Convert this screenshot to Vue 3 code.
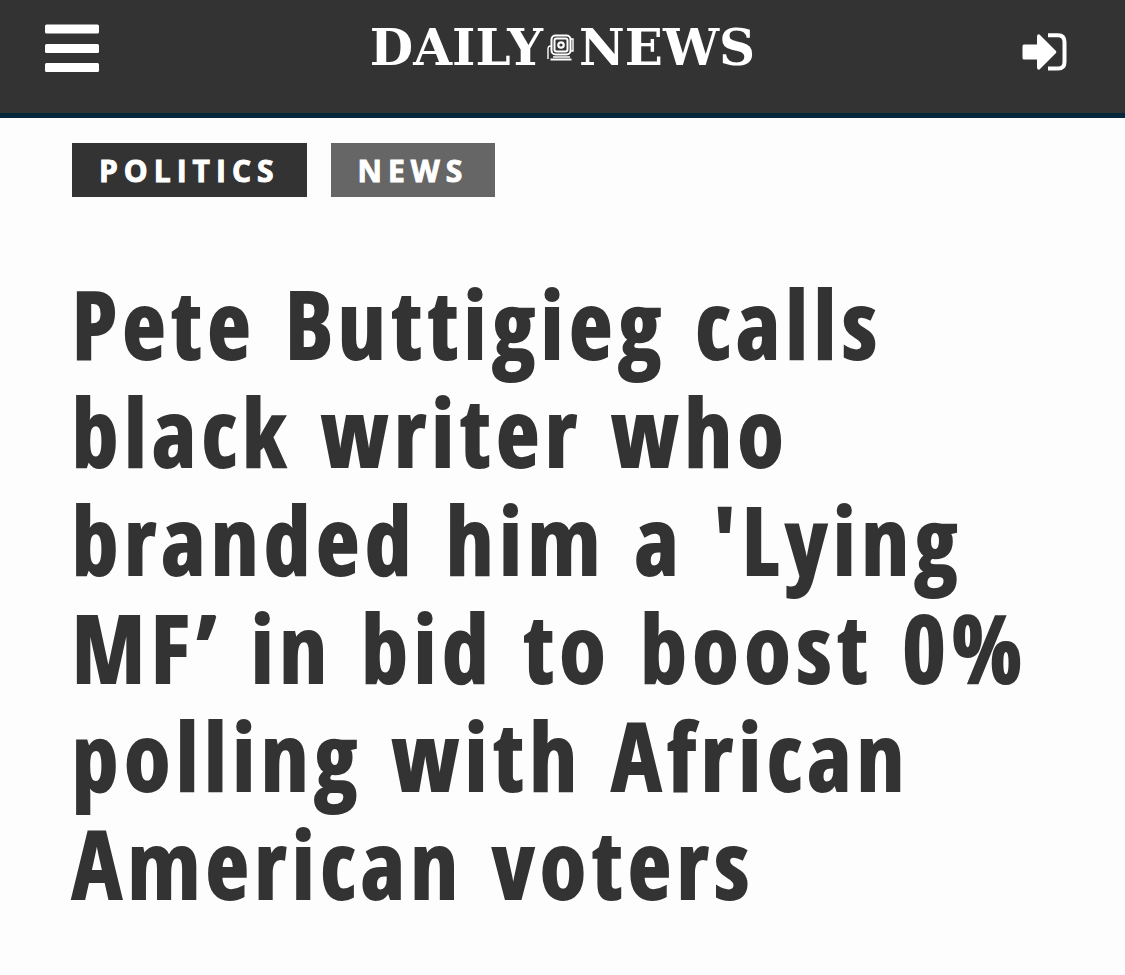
<script setup>
const tags = [
  { label: 'POLITICS', kind: 'primary' },
  { label: 'NEWS', kind: 'secondary' },
]
</script>

<template>
  <header class="masthead">
    <button class="icon-button" type="button" aria-label="Open menu">
      <svg width="54" height="49" viewBox="0 0 54 49" fill="#fff" aria-hidden="true">
        <rect x="0" y="0.5" width="54" height="9" rx="1.5" />
        <rect x="0" y="20" width="54" height="9" rx="1.5" />
        <rect x="0" y="39" width="54" height="9" rx="1.5" />
      </svg>
    </button>
    <a class="logo" href="#" aria-label="Daily News">
      <span>DAILY</span>
      <svg width="28" height="28" viewBox="0 0 28 28" fill="none" stroke="#fff" aria-hidden="true">
        <rect x="4.500" y="1.500" width="19" height="19" rx="4" stroke-width="2" />
        <rect x="7.500" y="4.500" width="13" height="13" rx="2" stroke-width="2" />
        <circle cx="14" cy="11" r="2.700" stroke-width="2.200" />
        <path d="M24 5h2v12h-2M4 12H3.500Q1 12 1 15v10M6 23h17" stroke-width="1.400" />
        <path d="M3.500 25.500h21" stroke-width="2" />
      </svg>
      <span>NEWS</span>
    </a>
    <button class="icon-button" type="button" aria-label="Log in">
      <svg width="46" height="38" viewBox="0 0 46 38" aria-hidden="true">
        <path d="M2 11.500H15V3Q15.500 .8 17.500 1.500L34 18Q34.700 19 34 20L17.500 36.500Q15.500 37.200 15 35V26.500H2Q.5 26.500 .5 25V13Q.5 11.500 2 11.500Z" fill="#fff" />
        <path d="M28 2.200H36Q42.500 2.200 42.500 9V29Q42.500 35.500 36 35.500H28" fill="none" stroke="#fff" stroke-width="4" stroke-linecap="square" stroke-linejoin="round" />
      </svg>
    </button>
  </header>
  <main class="article">
    <nav class="tags" aria-label="Sections">
      <a v-for="tag in tags" :key="tag.label" href="#" class="tag" :class="tag.kind">{{ tag.label }}</a>
    </nav>
    <h1>Pete Buttigieg calls black writer who branded him a 'Lying MF’ in bid to boost 0% polling with African American voters</h1>
  </main>
</template>

<style>
body {
  margin: 0;
  background: #fdfdfd;
}
</style>

<style scoped>
.masthead {
  box-sizing: border-box;
  display: grid;
  grid-template-columns: 1fr auto 1fr;
  align-items: start;
  height: 118px;
  padding: 24px 57px 0 45px;
  background: #333;
  border-bottom: 5px solid #05273b;
}
.icon-button {
  display: flex;
  justify-self: start;
  padding: 0;
  border: 0;
  background: none;
  cursor: pointer;
}
.icon-button:last-child {
  justify-self: end;
  padding-top: 9px;
}
.logo {
  display: flex;
  align-items: center;
  gap: 4px;
  padding-left: 12px;
  color: #fff;
  font: bold 50px/48px "DejaVu Serif", serif;
  text-decoration: none;
}
.article {
  padding: 25px 72px 60px;
  color: #333;
}
.tags {
  display: flex;
  gap: 24px;
}
.tag {
  padding: 0 27px;
  color: #fff;
  font: 700 30px/56px "Open Sans", sans-serif;
  height: 54px;
  letter-spacing: 6px;
  text-decoration: none;
  -webkit-text-stroke: 1px #fff;
}
.primary {
  background: #333;
}
.secondary {
  background: #666;
}
h1 {
  margin: 72px 0 0;
  font: 700 93px/108px "Open Sans Condensed", "Open Sans", sans-serif;
  letter-spacing: 6px;
  -webkit-text-stroke: 2px #333;
}
</style>
